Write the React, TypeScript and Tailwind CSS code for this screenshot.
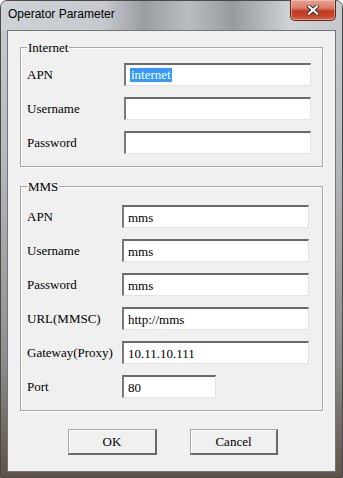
import React from "react";

interface FieldProps {
  label: string;
  value?: string;
  selected?: boolean;
  labelWidth: string;
  inputWidth: string;
}

const Field: React.FC<FieldProps> = (props) => {
  return (
    <div className="flex items-center h-[23px]">
      <span className={`${props.labelWidth} shrink-0 text-[13px] leading-[15px] text-black`}>
        {props.label}
      </span>
      <div
        className={`${props.inputWidth} h-[23px] flex items-center pl-[4px] bg-white border-t-2 border-l-2 border-b border-r border-t-[#6a6a6a] border-l-[#7a7a7a] border-b-[#e3e3e3] border-r-[#e3e3e3] text-[13px] leading-[15px] text-black`}
      >
        {props.selected ? (
          <span className="bg-[#3399ff] text-white px-px leading-[14px]">{props.value}</span>
        ) : (
          <span>{props.value}</span>
        )}
      </div>
    </div>
  );
};

const GroupBox: React.FC<{ title: string; className: string; children: React.ReactNode }> = (props) => {
  return (
    <div
      className={`relative mx-[12px] pl-[6px] border border-[#a5a5a5] shadow-[1px_1px_0_#ffffff,inset_1px_1px_0_#ffffff] ${props.className}`}
    >
      <span className="absolute -top-[8px] left-[6px] px-[1px] bg-[#f0f0f0] text-[13px] leading-[15px] text-black">
        {props.title}
      </span>
      <div className="flex flex-col gap-[11px]">{props.children}</div>
    </div>
  );
};

const CloseGlyph = () => (
  <svg width="12" height="10" viewBox="0 0 12 10">
    <path d="M2 1.5 L10 8.5 M10 1.5 L2 8.5" stroke="#3b2a26" strokeWidth="4" strokeLinecap="square" />
    <path d="M2 1.5 L10 8.5 M10 1.5 L2 8.5" stroke="#ffffff" strokeWidth="2.2" strokeLinecap="square" />
  </svg>
);

export default function App() {
  return (
    <div className="w-[343px] h-[478px] overflow-hidden">
      <div className="w-[343px] h-[478px] flex flex-col rounded-t-[7px] border border-[#4a4a4a] bg-[linear-gradient(180deg,#c8cdd2_0%,#b3b8bd_35%,#8f8e8c_75%,#5f5244_100%)]">
        <div className="h-[29px] shrink-0 flex justify-between items-start rounded-t-[6px] bg-[linear-gradient(90deg,#ced2d6_0%,#c6cacf_30%,#9a9ea2_42%,#b9bdc1_55%,#979b9f_68%,#cfd3d6_85%,#c4c8cc_100%)]">
          <span className="ml-[7px] mt-[6px] text-[12px] leading-[15px] text-black font-['Liberation_Sans',Arial,sans-serif]">
            Operator Parameter
          </span>
          <div className="-mt-px mr-[6px] w-[46px] h-[21px] flex items-center justify-center rounded-b-[5px] border border-t-0 border-[#5a2a22] bg-[linear-gradient(180deg,#e6a293_0%,#d97f6a_40%,#c13c24_55%,#c4452b_80%,#d86a4e_100%)] shadow-[inset_0_0_0_1px_rgba(255,220,210,0.45)]">
            <CloseGlyph />
          </div>
        </div>
        <div className="mx-[6px] mb-[5px] flex-1 border border-[#6f747a] bg-[#f0f0f0] font-['Liberation_Serif','Times_New_Roman',serif]">
          <GroupBox title="Internet" className="mt-[16px] pt-[15px] pb-[12px]">
            <Field label="APN" value="internet" selected labelWidth="w-[97px]" inputWidth="w-[187px]" />
            <Field label="Username" labelWidth="w-[97px]" inputWidth="w-[187px]" />
            <Field label="Password" labelWidth="w-[97px]" inputWidth="w-[187px]" />
          </GroupBox>
          <GroupBox title="MMS" className="mt-[19px] pt-[18px] pb-[12px]">
            <Field label="APN" value="mms" labelWidth="w-[95px]" inputWidth="w-[187px]" />
            <Field label="Username" value="mms" labelWidth="w-[95px]" inputWidth="w-[187px]" />
            <Field label="Password" value="mms" labelWidth="w-[95px]" inputWidth="w-[187px]" />
            <Field label="URL(MMSC)" value="http://mms" labelWidth="w-[95px]" inputWidth="w-[187px]" />
            <Field label="Gateway(Proxy)" value="10.11.10.111" labelWidth="w-[95px]" inputWidth="w-[187px]" />
            <Field label="Port" value="80" labelWidth="w-[95px]" inputWidth="w-[94px]" />
          </GroupBox>
          <div className="flex gap-[33px] pl-[60px] mt-[18px]">
            <button className="w-[89px] h-[26px] bg-[#f0f0f0] border-t border-l border-b-2 border-r-2 border-t-[#a8a8a8] border-l-[#a8a8a8] border-b-[#6a6a6a] border-r-[#6a6a6a] shadow-[inset_1px_1px_0_#ffffff] text-[13px] text-black">
              OK
            </button>
            <button className="w-[88px] h-[26px] bg-[#f0f0f0] border-t border-l border-b-2 border-r-2 border-t-[#a8a8a8] border-l-[#a8a8a8] border-b-[#6a6a6a] border-r-[#6a6a6a] shadow-[inset_1px_1px_0_#ffffff] text-[13px] text-black">
              Cancel
            </button>
          </div>
        </div>
      </div>
    </div>
  );
}
